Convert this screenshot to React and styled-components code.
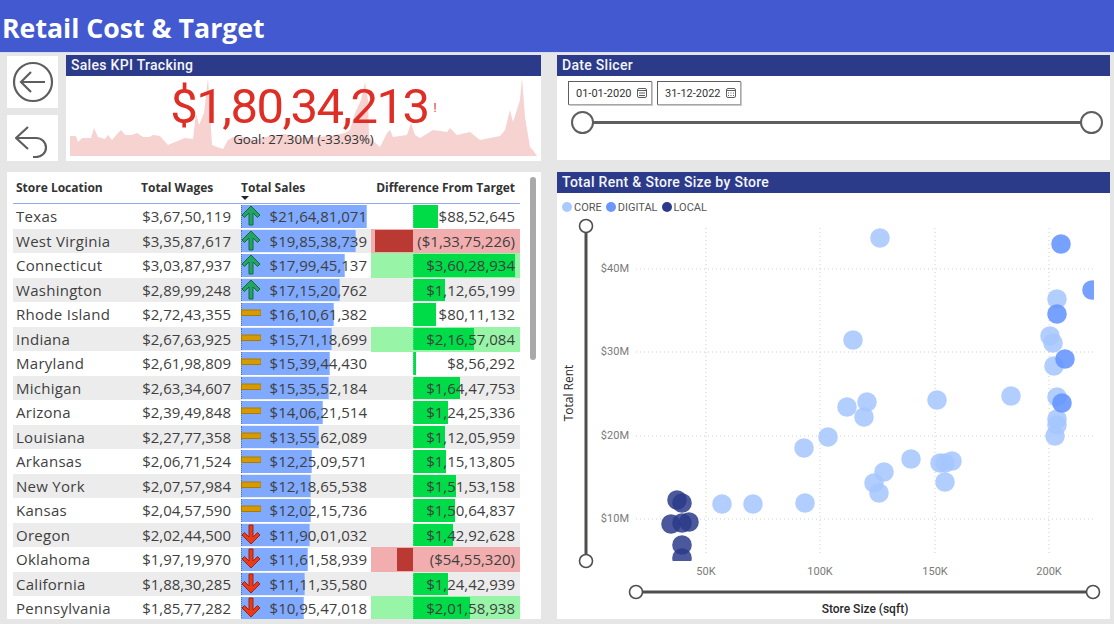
import React from 'react'
import styled, { createGlobalStyle } from 'styled-components'

const GlobalStyle = createGlobalStyle`
  html, body { margin: 0; padding: 0; width: 1114px; height: 624px; overflow: hidden; background: #e6e6e6; }
  * { box-sizing: border-box; }
`

const stores = [
  { name: 'Texas', wages: '$3,67,50,119', sales: '$21,64,81,071', salesEnd: 367, trend: 'up', diff: '$88,52,645', edge: 438 },
  { name: 'West Virginia', wages: '$3,35,87,617', sales: '$19,85,38,739', salesEnd: 356, trend: 'up', diff: '($1,33,75,226)', edge: 375, tint: 'bad' },
  { name: 'Connecticut', wages: '$3,03,87,937', sales: '$17,99,45,137', salesEnd: 345, trend: 'up', diff: '$3,60,28,934', edge: 515, tint: 'good' },
  { name: 'Washington', wages: '$2,89,99,248', sales: '$17,15,20,762', salesEnd: 340, trend: 'up', diff: '$1,12,65,199', edge: 445 },
  { name: 'Rhode Island', wages: '$2,72,43,355', sales: '$16,10,61,382', salesEnd: 334, trend: 'flat', diff: '$80,11,132', edge: 436 },
  { name: 'Indiana', wages: '$2,67,63,925', sales: '$15,71,18,699', salesEnd: 332, trend: 'flat', diff: '$2,16,57,084', edge: 474, tint: 'good' },
  { name: 'Maryland', wages: '$2,61,98,809', sales: '$15,39,44,430', salesEnd: 330, trend: 'flat', diff: '$8,56,292', edge: 416 },
  { name: 'Michigan', wages: '$2,63,34,607', sales: '$15,35,52,184', salesEnd: 329, trend: 'flat', diff: '$1,64,47,753', edge: 460 },
  { name: 'Arizona', wages: '$2,39,49,848', sales: '$14,06,21,514', salesEnd: 323, trend: 'flat', diff: '$1,24,25,336', edge: 448 },
  { name: 'Louisiana', wages: '$2,27,77,358', sales: '$13,55,62,089', salesEnd: 319, trend: 'flat', diff: '$1,12,05,959', edge: 445 },
  { name: 'Arkansas', wages: '$2,06,71,524', sales: '$12,25,09,571', salesEnd: 312, trend: 'flat', diff: '$1,15,13,805', edge: 446 },
  { name: 'New York', wages: '$2,07,57,984', sales: '$12,18,65,538', salesEnd: 311, trend: 'flat', diff: '$1,51,53,158', edge: 456 },
  { name: 'Kansas', wages: '$2,04,57,590', sales: '$12,02,15,736', salesEnd: 311, trend: 'flat', diff: '$1,50,64,837', edge: 455 },
  { name: 'Oregon', wages: '$2,02,44,500', sales: '$11,90,01,032', salesEnd: 310, trend: 'down', diff: '$1,42,92,628', edge: 453 },
  { name: 'Oklahoma', wages: '$1,97,19,970', sales: '$11,61,58,939', salesEnd: 308, trend: 'down', diff: '($54,55,320)', edge: 397, tint: 'bad' },
  { name: 'California', wages: '$1,88,30,285', sales: '$11,11,35,580', salesEnd: 305, trend: 'down', diff: '$1,24,42,939', edge: 448 },
  { name: 'Pennsylvania', wages: '$1,85,77,282', sales: '$10,95,47,018', salesEnd: 304, trend: 'down', diff: '$2,01,58,938', edge: 470, tint: 'good' },
]

const SALES_START = 241
const ZERO_X = 413

const sparkline = [
  [70, 136], [76, 136], [78, 142], [82, 138], [91, 138], [94, 128], [98, 137], [105, 139], [108, 135], [112, 140],
  [117, 134], [121, 130], [125, 135], [132, 135], [137, 133], [143, 137], [149, 137], [153, 135], [160, 136], [168, 145],
  [175, 142], [185, 138], [193, 139], [196, 113], [199, 125], [204, 113], [208, 78], [212, 145], [217, 147], [223, 149],
  [228, 140], [233, 137], [245, 137], [255, 140], [270, 136], [285, 134], [300, 138], [315, 137], [330, 136], [345, 133],
  [350, 130], [355, 113], [361, 100], [365, 82], [368, 100], [369, 137], [380, 147], [387, 133], [390, 130], [393, 137],
  [407, 135], [411, 123], [415, 135], [420, 138], [425, 135], [433, 130], [447, 132], [450, 128], [457, 135], [470, 132],
  [480, 140], [500, 136], [505, 130], [510, 110], [513, 122], [520, 100], [522, 78], [525, 117], [530, 147], [532, 149],
  [535, 153], [537, 156],
]

const sparkArea = `M70 156 L${sparkline.map(p => p.join(' ')).join(' L')} Z`

const core = [
  [880, 238], [1057, 299], [1050, 336], [1053, 343], [1054, 366], [853, 340], [847, 407], [867, 402], [864, 417],
  [937, 400], [1011, 396], [1057, 397], [1057, 419], [1057, 425], [1055, 436], [828, 437], [804, 448], [911, 459],
  [884, 472], [874, 483], [879, 493], [940, 463], [945, 463], [952, 461], [945, 482], [722, 504], [753, 504], [805, 503],
]
const digital = [[1061, 244], [1092, 290], [1057, 314], [1065, 359], [1062, 403]]
const local = [[677, 500], [682, 503], [671, 524], [682, 523], [689, 522], [682, 545], [682, 558]]

const Page = styled.div`
  width: 1114px;
  height: 624px;
  overflow: hidden;
  background: #e6e6e6;
  font-family: "Open Sans", sans-serif;
`

const Header = styled.header`
  height: 52px;
  background: #4359cf;
  color: #fff;
  font-size: 26.7px;
  font-weight: 700;
  line-height: 56px;
  padding-left: 2px;
  box-shadow: 0 1px 0 #d8dcf0;
`

const Main = styled.main`
  display: grid;
  grid-template-columns: 534px 553px;
  grid-template-rows: 105px 447px;
  column-gap: 16px;
  row-gap: 12px;
  padding: 3px 0 0 7px;
`

const TopLeft = styled.div`
  display: grid;
  grid-template-columns: 51px 475px;
  column-gap: 8px;
`

const NavColumn = styled.div`
  display: grid;
  grid-template-rows: 52px 46px;
  row-gap: 7px;
  padding-top: 1px;
`

const NavButton = styled.div`
  background: #fff;
  display: flex;
  align-items: center;
  justify-content: center;
`

const Panel = styled.section`
  background: #fff;
  position: relative;
  overflow: hidden;
  display: flex;
  flex-direction: column;
`

const PanelTitle = styled.h2`
  margin: 0;
  height: 21px;
  flex: none;
  background: #2b3b8a;
  color: #f4f5fb;
  font-family: Roboto, sans-serif;
  font-size: 14px;
  font-weight: 500;
  line-height: 20px;
  letter-spacing: 0.3px;
  padding-left: 5px;
`

const KpiBody = styled.div`
  position: relative;
  flex: 1;
  display: flex;
  flex-direction: column;
  align-items: center;
`

const Spark = styled.svg`
  position: absolute;
  left: 0;
  top: 0;
  width: 475px;
  height: 84px;
`

const KpiRow = styled.div`
  position: relative;
  display: flex;
  align-items: center;
  color: #de2e26;
  height: 46px;
  margin-top: 8px;
`

const KpiValue = styled.span`
  font-family: Roboto, sans-serif;
  font-size: 49px;
  letter-spacing: -1.55px;
  line-height: 46px;
`

const KpiAlert = styled.span`
  font-family: Roboto, sans-serif;
  font-size: 12px;
  margin-left: 5px;
  margin-top: 2px;
`

const KpiGoal = styled.div`
  position: relative;
  color: #333;
  font-size: 13.2px;
  line-height: 16px;
  margin-top: 1px;
`

const DateRow = styled.div`
  display: flex;
  gap: 5px;
  padding: 5px 0 0 11px;
`

const DateBox = styled.div`
  width: 84px;
  height: 24px;
  border: 1px solid #605e5c;
  border-right-color: #a6a6a6;
  border-bottom-color: #a6a6a6;
  box-shadow: 1px 1px 0 #c8c8c8;
  display: flex;
  align-items: center;
  justify-content: space-between;
  padding: 0 4px 0 7px;
  font-family: Roboto, sans-serif;
  font-size: 11px;
  color: #333;
`

const RangeTrack = styled.div`
  position: relative;
  height: 3px;
  background: #605e5c;
  margin: 16px 18px 0 25px;
`

const RangeHandle = styled.span`
  position: absolute;
  top: -10px;
  ${p => (p.$end ? 'right: -11px;' : 'left: -11px;')}
  width: 23px;
  height: 23px;
  border-radius: 50%;
  background: #fff;
  border: 2px solid #605e5c;
`

const TablePanel = styled(Panel)`
  padding: 0 0 0 6px;
`

const Scrollbar = styled.div`
  position: absolute;
  left: 523px;
  top: 5px;
  width: 6px;
  height: 183px;
  border-radius: 3px;
  background: #a9a9a9;
`

const Head = styled.div`
  display: grid;
  grid-template-columns: 124px 103px 131px 149px;
  width: 507px;
  height: 32px;
  border-bottom: 1px solid #98a6ec;
  flex: none;
`

const HeadCell = styled.div`
  position: relative;
  font-size: 12px;
  font-weight: 700;
  color: #333;
  line-height: 31px;
  white-space: nowrap;
  padding-left: ${p => p.$pad || 0}px;
  text-align: ${p => (p.$right ? 'right' : 'left')};
  padding-right: ${p => (p.$right ? 5 : 0)}px;
`

const SortMark = styled.span`
  position: absolute;
  left: 1px;
  top: 24px;
  width: 0;
  height: 0;
  border-left: 4px solid transparent;
  border-right: 4px solid transparent;
  border-top: 4px solid #222;
`

const Row = styled.div`
  display: grid;
  grid-template-columns: 124px 103px 131px 149px;
  width: 507px;
  height: 24.5px;
  flex: none;
  background: ${p => (p.$striped ? '#ececec' : '#fff')};
  color: #3f3f3f;
  font-size: 15px;
  line-height: 25px;
`

const NameCell = styled.div`
  padding-left: 3px;
  white-space: nowrap;
  letter-spacing: 0.28px;
`

const MoneyCell = styled.div`
  text-align: right;
  padding-right: 9px;
  white-space: nowrap;
`

const SalesCell = styled.div`
  position: relative;
  text-align: right;
  padding-right: 4px;
  white-space: nowrap;
`

const SalesBar = styled.span`
  position: absolute;
  left: 1px;
  top: 1px;
  height: 22.5px;
  background: #7faaff;
  border-left: 1px dotted #4a6fb8;
  border-right: 1px solid #a4c2ff;
`

const CellText = styled.span`
  position: relative;
`

const TrendIcon = styled.svg`
  position: absolute;
  left: 1px;
  top: 1px;
  width: 20px;
  height: 21px;
`

const DiffCell = styled.div`
  position: relative;
  text-align: right;
  padding-right: 5px;
  white-space: nowrap;
  background: ${p => (p.$tint === 'good' ? '#98f5a8' : p.$tint === 'bad' ? '#f2aeae' : 'transparent')};
`

const DiffBar = styled.span`
  position: absolute;
  top: 1px;
  height: 22.5px;
  background: ${p => (p.$negative ? '#ba3a33' : '#00dc47')};
  border-left: ${p => (p.$negative ? '0' : '1px dotted #3ee878')};
`

const Legend = styled.div`
  display: flex;
  align-items: center;
  height: 22px;
  flex: none;
  padding: 6px 0 0 5px;
  font-family: Roboto, sans-serif;
  font-size: 11px;
  color: #555;
`

const LegendItem = styled.span`
  display: flex;
  align-items: center;
  gap: 2px;
  margin-right: 4px;
  &::before {
    content: '';
    width: 10px;
    height: 10px;
    border-radius: 50%;
    background: ${p => p.$color};
  }
`

const Chart = styled.svg`
  display: block;
  width: 553px;
  height: 404px;
  flex: none;
`

const Tick = styled.text`
  font-family: Roboto, sans-serif;
  font-size: 11px;
  fill: #7a7a7a;
`

const AxisTitle = styled.text`
  font-family: ${p => (p.$vertical ? '"Open Sans"' : 'Roboto')}, sans-serif;
  font-size: 12px;
  font-weight: ${p => (p.$vertical ? 400 : 500)};
  fill: #2a2a2a;
`

const TREND_POINTS = {
  up: '10,1 19,10 16.5,12.5 12,8 12,20 8,20 8,8 3.5,12.5 1,10',
  down: '10,20 19,11 16.5,8.5 12,13 12,1 8,1 8,13 3.5,8.5 1,11',
}

const TREND_COLORS = {
  up: ['#22a564', '#17683f'],
  down: ['#ea3a18', '#9c2410'],
}

const Trend = ({ kind }) => {
  if (kind === 'flat') {
    return (
      <TrendIcon viewBox="0 0 20 21">
        <rect x="0.5" y="7" width="19.5" height="5.5" fill="#d79b00" stroke="#a87a0a" />
      </TrendIcon>
    )
  }
  return (
    <TrendIcon viewBox="0 0 20 21">
      <polygon points={TREND_POINTS[kind]} fill={TREND_COLORS[kind][0]} stroke={TREND_COLORS[kind][1]} strokeWidth="1" />
    </TrendIcon>
  )
}

const CalendarIcon = ({ dots }) => (
  <svg width="10" height="10" viewBox="0 0 10 10" fill="none" stroke="#605e5c" strokeWidth="1">
    <rect x="0.5" y="0.5" width="9" height="9" rx="1.5" />
    <path d="M1 2.5h8" />
    {dots ? <path d="M2 5h1M4.5 5h1M7 5h1M2 7.5h1M4.5 7.5h1M7 7.5h1" /> : <path d="M2 5h6M2 7.5h6" />}
  </svg>
)

const StoreRow = ({ store, striped }) => {
  const negative = store.edge < ZERO_X
  const barLeft = negative ? store.edge - 371 : ZERO_X - 371
  const barWidth = Math.abs(store.edge - ZERO_X)
  return (
    <Row $striped={striped}>
      <NameCell>{store.name}</NameCell>
      <MoneyCell>{store.wages}</MoneyCell>
      <SalesCell>
        <SalesBar style={{ width: store.salesEnd - SALES_START }} />
        <Trend kind={store.trend} />
        <CellText>{store.sales}</CellText>
      </SalesCell>
      <DiffCell $tint={store.tint}>
        <DiffBar $negative={negative} style={{ left: barLeft, width: barWidth }} />
        <CellText>{store.diff}</CellText>
      </DiffCell>
    </Row>
  )
}

const Dots = ({ items, fill, opacity }) =>
  items.map(([x, y]) => <circle key={`${x}-${y}`} cx={x} cy={y} r="9.8" fill={fill} fillOpacity={opacity} />)

const Handle = ({ x, y }) => <circle cx={x} cy={y} r="6.5" fill="#fff" stroke="#504e4c" strokeWidth="1.6" />

const ScatterChart = () => (
  <Chart viewBox="557 215 553 404">
    <defs>
      <clipPath id="plot">
        <rect x="636" y="220" width="458" height="341" />
      </clipPath>
    </defs>
    <g stroke="#cfcfcf" strokeWidth="1" strokeDasharray="1 3">
      {[269, 352, 436, 519].map(y => <line key={y} x1="636" x2="1093" y1={y} y2={y} />)}
      {[706, 820, 935, 1049].map(x => <line key={x} x1={x} x2={x} y1="228" y2="556" />)}
    </g>
    {[['$40M', 269], ['$30M', 352], ['$20M', 436], ['$10M', 519]].map(([label, y]) => (
      <Tick key={label} x="629" y={y + 3} textAnchor="end">{label}</Tick>
    ))}
    {[['50K', 706], ['100K', 820], ['150K', 935], ['200K', 1049]].map(([label, x]) => (
      <Tick key={label} x={x} y="575" textAnchor="middle">{label}</Tick>
    ))}
    <g clipPath="url(#plot)">
      <Dots items={core} fill="#a4c6ff" opacity="0.85" />
      <Dots items={digital} fill="#6494ff" opacity="0.88" />
      <Dots items={local} fill="#2b3b8a" opacity="0.85" />
    </g>
    <line x1="586" x2="586" y1="226" y2="561" stroke="#504e4c" strokeWidth="3" />
    <Handle x={586} y={226} />
    <Handle x={586} y={561} />
    <line x1="636" x2="1093" y1="592" y2="592" stroke="#504e4c" strokeWidth="3" />
    <Handle x={636} y={592} />
    <Handle x={1093} y={592} />
    <AxisTitle $vertical x="573" y="393" textAnchor="middle" transform="rotate(-90 573 393)">Total Rent</AxisTitle>
    <AxisTitle x="865" y="613" textAnchor="middle">Store Size (sqft)</AxisTitle>
  </Chart>
)

const App = () => (
  <Page>
    <GlobalStyle />
    <Header>Retail Cost &amp; Target</Header>
    <Main>
      <TopLeft>
        <NavColumn>
          <NavButton>
            <svg width="44" height="44" viewBox="0 0 44 44" fill="none" stroke="#605e5c" strokeWidth="2.2">
              <circle cx="22" cy="22" r="19" />
              <path d="M34 22H10M20 12L10 22l10 10" />
            </svg>
          </NavButton>
          <NavButton>
            <svg width="36" height="40" viewBox="0 0 36 40" fill="none" stroke="#605e5c" strokeWidth="2.2">
              <path d="M13 9L1 20l12 11M1 20h20a10 9.5 0 0 1 0 19h-3" />
            </svg>
          </NavButton>
        </NavColumn>
        <Panel>
          <PanelTitle>Sales KPI Tracking</PanelTitle>
          <KpiBody>
            <Spark viewBox="66 76 475 84">
              <path d={sparkArea} fill="#f6d3d1" />
            </Spark>
            <KpiRow>
              <KpiValue>$1,80,34,213</KpiValue>
              <KpiAlert>!</KpiAlert>
            </KpiRow>
            <KpiGoal>Goal: 27.30M (-33.93%)</KpiGoal>
          </KpiBody>
        </Panel>
      </TopLeft>
      <Panel>
        <PanelTitle>Date Slicer</PanelTitle>
        <DateRow>
          <DateBox>01-01-2020 <CalendarIcon /></DateBox>
          <DateBox>31-12-2022 <CalendarIcon dots /></DateBox>
        </DateRow>
        <RangeTrack>
          <RangeHandle />
          <RangeHandle $end />
        </RangeTrack>
      </Panel>
      <TablePanel>
        <Head>
          <HeadCell $pad={3}>Store Location</HeadCell>
          <HeadCell $pad={4}>Total Wages</HeadCell>
          <HeadCell $pad={1}>
            Total Sales
            <SortMark />
          </HeadCell>
          <HeadCell $right>Difference From Target</HeadCell>
        </Head>
        {stores.map((store, i) => (
          <StoreRow key={store.name} store={store} striped={i % 2 === 1} />
        ))}
        <Scrollbar />
      </TablePanel>
      <Panel>
        <PanelTitle>Total Rent &amp; Store Size by Store</PanelTitle>
        <Legend>
          <LegendItem $color="#a9c9ff">CORE</LegendItem>
          <LegendItem $color="#6b96ff">DIGITAL</LegendItem>
          <LegendItem $color="#2b3b8a">LOCAL</LegendItem>
        </Legend>
        <ScatterChart />
      </Panel>
    </Main>
  </Page>
)

export default App
